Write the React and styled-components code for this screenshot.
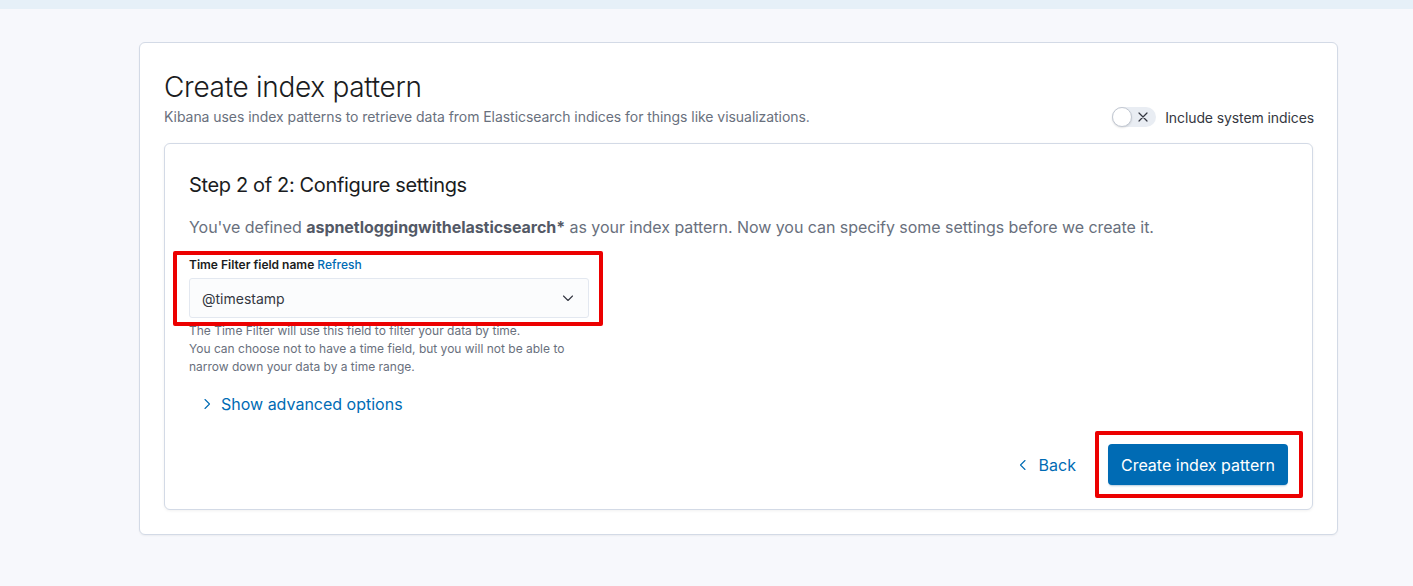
import React from 'react'
import styled, { createGlobalStyle } from 'styled-components'

const GlobalStyle = createGlobalStyle`
  html, body {
    margin: 0;
    padding: 0;
    background: #f7f8fc;
    font-family: Inter, "Noto Sans", "Liberation Sans", sans-serif;
    color: #343741;
  }
`

const TopBar = styled.div`
  height: 9px;
  background: #e6f0f8;
`

const Page = styled.main`
  padding: 33px 75px 40px 139px;
`

const Panel = styled.section`
  width: 1199px;
  box-sizing: border-box;
  background: #fff;
  border: 1px solid #d3dae6;
  border-radius: 6px;
  box-shadow: 0 1px 2px rgba(0, 0, 0, 0.05);
  padding: 24px;
`

const Header = styled.div`
  display: flex;
  justify-content: space-between;
  align-items: flex-end;
  margin-bottom: 16px;
`

const Title = styled.h1`
  margin: 0;
  font-size: 28px;
  line-height: 40px;
  font-weight: 300;
  color: #1a1c21;
  letter-spacing: -0.3px;
`

const Subtitle = styled.p`
  margin: 0;
  font-size: 14px;
  line-height: 20px;
  color: #69707d;
  letter-spacing: -0.05px;
`

const SwitchRow = styled.label`
  display: flex;
  align-items: center;
  gap: 9px;
  font-size: 14px;
  color: #343741;
  letter-spacing: -0.1px;
  margin-right: -1px;
`

const Track = styled.span`
  position: relative;
  display: inline-flex;
  align-items: center;
  justify-content: flex-end;
  width: 44px;
  height: 20px;
  box-sizing: border-box;
  padding-right: 7px;
  border-radius: 10px;
  background: #e9edf3;
`

const Thumb = styled.span`
  position: absolute;
  left: 0;
  top: 0;
  width: 20px;
  height: 20px;
  box-sizing: border-box;
  border-radius: 50%;
  background: #fff;
  border: 1px solid #c2c8d2;
  box-shadow: 0 1px 2px rgba(0, 0, 0, 0.12);
`

const Card = styled.div`
  border: 1px solid #d3dae6;
  border-radius: 6px;
  box-shadow: 0 1px 3px rgba(0, 0, 0, 0.06);
  padding: 27px 24px 24px;
  background: #fff;
`

const StepTitle = styled.h2`
  margin: 0 0 16px;
  font-size: 20px;
  line-height: 28px;
  font-weight: 400;
  color: #1a1c21;
  letter-spacing: -0.35px;
`

const Lead = styled.p`
  margin: 0 0 17px;
  font-size: 16px;
  line-height: 24px;
  color: #69707d;
  letter-spacing: -0.05px;

  strong {
    color: #535966;
    font-weight: 700;
  }
`

const Field = styled.div`
  width: 400px;
`

const Highlight = styled.div`
  position: relative;
  display: ${p => (p.$inline ? 'inline-block' : 'block')};

  &::after {
    content: '';
    position: absolute;
    inset: ${p => p.$inset};
    border: 4px solid #ec0000;
    border-radius: 2px;
    pointer-events: none;
  }
`

const Label = styled.div`
  font-size: 12px;
  line-height: 18px;
  font-weight: 600;
  color: #1a1c21;
  margin-bottom: 4px;

  a {
    color: #006bb4;
    font-weight: 500;
    text-decoration: none;
    margin-left: 3px;
  }
`

const Select = styled.div`
  display: flex;
  align-items: center;
  justify-content: space-between;
  height: 40px;
  box-sizing: border-box;
  padding: 0 12px;
  background: #fbfcfd;
  border: 1px solid #e3e8f0;
  border-radius: 3px;
  font-size: 14px;
  color: #343741;
`

const Help = styled.div`
  margin-top: 4px;
  font-size: 12px;
  line-height: 18px;
  color: #69707d;
`

const Advanced = styled.div`
  margin-top: 16px;
`

const LinkButton = styled.button`
  display: inline-flex;
  align-items: center;
  gap: ${p => p.$gap || 8}px;
  border: 0;
  background: none;
  font: inherit;
  font-size: 16px;
  line-height: 24px;
  color: #006bb4;
  padding: 0;
  margin-left: ${p => p.$indent || 0}px;
  cursor: pointer;
`

const Footer = styled.div`
  display: flex;
  justify-content: flex-end;
  align-items: center;
  gap: 32px;
  margin-top: 28px;
`

const Primary = styled.button`
  display: block;
  height: 41px;
  padding: 0 13px;
  border: 0;
  border-radius: 4px;
  background: #006bb4;
  color: #fff;
  font: inherit;
  font-size: 16px;
  font-weight: 400;
  box-shadow: 0 2px 2px -1px rgba(0, 80, 140, 0.3);
`

const Chevron = ({ dir, size = 16, color = 'currentColor' }) => {
  const d = {
    down: 'M3.5 6 L8 10.5 L12.5 6',
    right: 'M6 3.5 L10.5 8 L6 12.5',
    left: 'M10 3.5 L5.5 8 L10 12.5'
  }[dir]
  return (
    <svg width={size} height={size} viewBox='0 0 16 16' fill='none'>
      <path d={d} stroke={color} strokeWidth='1.1' strokeLinecap='round' strokeLinejoin='round' />
    </svg>
  )
}

const Cross = () => (
  <svg width='12' height='12' viewBox='0 0 12 12' fill='none'>
    <path d='M2 2 L10 10 M10 2 L2 10' stroke='#343741' strokeWidth='1.2' strokeLinecap='round' />
  </svg>
)

export default function App () {
  return (
    <>
      <GlobalStyle />
      <TopBar />
      <Page>
        <Panel>
          <Header>
            <div>
              <Title>Create index pattern</Title>
              <Subtitle>
                Kibana uses index patterns to retrieve data from Elasticsearch indices for things like visualizations.
              </Subtitle>
            </div>
            <SwitchRow>
              <Track>
                <Thumb />
                <Cross />
              </Track>
              Include system indices
            </SwitchRow>
          </Header>
          <Card>
            <StepTitle>Step 2 of 2: Configure settings</StepTitle>
            <Lead>
              You've defined <strong>aspnetloggingwithelasticsearch*</strong> as your index pattern. Now you can specify some settings before we create it.
            </Lead>
            <Field>
              <Highlight $inset='-5px -14px -8px -16px'>
                <Label>
                  Time Filter field name<a href='#'>Refresh</a>
                </Label>
                <Select>
                  @timestamp
                  <Chevron dir='down' color='#343741' />
                </Select>
              </Highlight>
              <Help>
                The Time Filter will use this field to filter your data by time.
                <br />
                You can choose not to have a time field, but you will not be able to narrow down your data by a time range.
              </Help>
            </Field>
            <Advanced>
              <LinkButton $indent={10} $gap={6}>
                <Chevron dir='right' />
                Show advanced options
              </LinkButton>
            </Advanced>
            <Footer>
              <LinkButton>
                <Chevron dir='left' />
                Back
              </LinkButton>
              <Highlight $inline $inset='-13px -15px -13px -13px'>
                <Primary>Create index pattern</Primary>
              </Highlight>
            </Footer>
          </Card>
        </Panel>
      </Page>
    </>
  )
}
